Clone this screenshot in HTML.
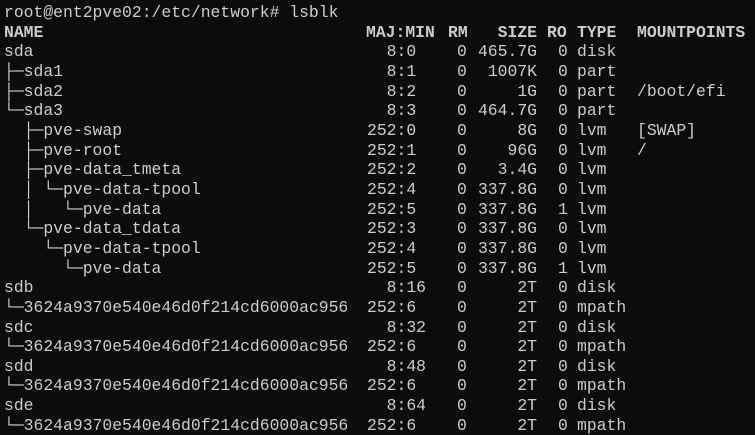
<!DOCTYPE html>
<html><head><meta charset="utf-8"><style>
html,body{margin:0;padding:0;background:#0c0c0c;width:755px;height:435px;overflow:hidden}
body{padding-top:3px;box-sizing:border-box}
.r{position:relative;height:19.67px;line-height:19.67px;font-family:"Liberation Mono","DejaVu Sans Mono",monospace;font-size:16.4px;color:#cccccc;white-space:pre}
.r span{position:absolute;top:0}
.n{left:4px}.m{left:367px}.rm{left:457px}.s{right:218px;text-align:right}.ro{left:558px}.t{left:577px}.p{left:637px}
.h{font-weight:bold}
</style></head><body>
<div class="r"><span class="n">root@ent2pve02:/etc/network# lsblk</span></div>
<div class="r h"><span class="n">NAME</span><span class="m" style="left:366px">MAJ:MIN</span><span style="left:448px">RM</span><span class="s">SIZE</span><span style="left:547px">RO</span><span class="t">TYPE</span><span class="p">MOUNTPOINTS</span></div>
<div class="r"><span class="n">sda</span><span class="m">  8:0</span><span class="rm">0</span><span class="s">465.7G</span><span class="ro">0</span><span class="t">disk</span></div>
<div class="r"><span class="n">├─sda1</span><span class="m">  8:1</span><span class="rm">0</span><span class="s">1007K</span><span class="ro">0</span><span class="t">part</span></div>
<div class="r"><span class="n">├─sda2</span><span class="m">  8:2</span><span class="rm">0</span><span class="s">1G</span><span class="ro">0</span><span class="t">part</span><span class="p">/boot/efi</span></div>
<div class="r"><span class="n">└─sda3</span><span class="m">  8:3</span><span class="rm">0</span><span class="s">464.7G</span><span class="ro">0</span><span class="t">part</span></div>
<div class="r"><span class="n">  ├─pve-swap</span><span class="m">252:0</span><span class="rm">0</span><span class="s">8G</span><span class="ro">0</span><span class="t">lvm</span><span class="p">[SWAP]</span></div>
<div class="r"><span class="n">  ├─pve-root</span><span class="m">252:1</span><span class="rm">0</span><span class="s">96G</span><span class="ro">0</span><span class="t">lvm</span><span class="p">/</span></div>
<div class="r"><span class="n">  ├─pve-data_tmeta</span><span class="m">252:2</span><span class="rm">0</span><span class="s">3.4G</span><span class="ro">0</span><span class="t">lvm</span></div>
<div class="r"><span class="n">  │ └─pve-data-tpool</span><span class="m">252:4</span><span class="rm">0</span><span class="s">337.8G</span><span class="ro">0</span><span class="t">lvm</span></div>
<div class="r"><span class="n">  │   └─pve-data</span><span class="m">252:5</span><span class="rm">0</span><span class="s">337.8G</span><span class="ro">1</span><span class="t">lvm</span></div>
<div class="r"><span class="n">  └─pve-data_tdata</span><span class="m">252:3</span><span class="rm">0</span><span class="s">337.8G</span><span class="ro">0</span><span class="t">lvm</span></div>
<div class="r"><span class="n">    └─pve-data-tpool</span><span class="m">252:4</span><span class="rm">0</span><span class="s">337.8G</span><span class="ro">0</span><span class="t">lvm</span></div>
<div class="r"><span class="n">      └─pve-data</span><span class="m">252:5</span><span class="rm">0</span><span class="s">337.8G</span><span class="ro">1</span><span class="t">lvm</span></div>
<div class="r"><span class="n">sdb</span><span class="m">  8:16</span><span class="rm">0</span><span class="s">2T</span><span class="ro">0</span><span class="t">disk</span></div>
<div class="r"><span class="n">└─3624a9370e540e46d0f214cd6000ac956</span><span class="m">252:6</span><span class="rm">0</span><span class="s">2T</span><span class="ro">0</span><span class="t">mpath</span></div>
<div class="r"><span class="n">sdc</span><span class="m">  8:32</span><span class="rm">0</span><span class="s">2T</span><span class="ro">0</span><span class="t">disk</span></div>
<div class="r"><span class="n">└─3624a9370e540e46d0f214cd6000ac956</span><span class="m">252:6</span><span class="rm">0</span><span class="s">2T</span><span class="ro">0</span><span class="t">mpath</span></div>
<div class="r"><span class="n">sdd</span><span class="m">  8:48</span><span class="rm">0</span><span class="s">2T</span><span class="ro">0</span><span class="t">disk</span></div>
<div class="r"><span class="n">└─3624a9370e540e46d0f214cd6000ac956</span><span class="m">252:6</span><span class="rm">0</span><span class="s">2T</span><span class="ro">0</span><span class="t">mpath</span></div>
<div class="r"><span class="n">sde</span><span class="m">  8:64</span><span class="rm">0</span><span class="s">2T</span><span class="ro">0</span><span class="t">disk</span></div>
<div class="r"><span class="n">└─3624a9370e540e46d0f214cd6000ac956</span><span class="m">252:6</span><span class="rm">0</span><span class="s">2T</span><span class="ro">0</span><span class="t">mpath</span></div>
</body></html>
